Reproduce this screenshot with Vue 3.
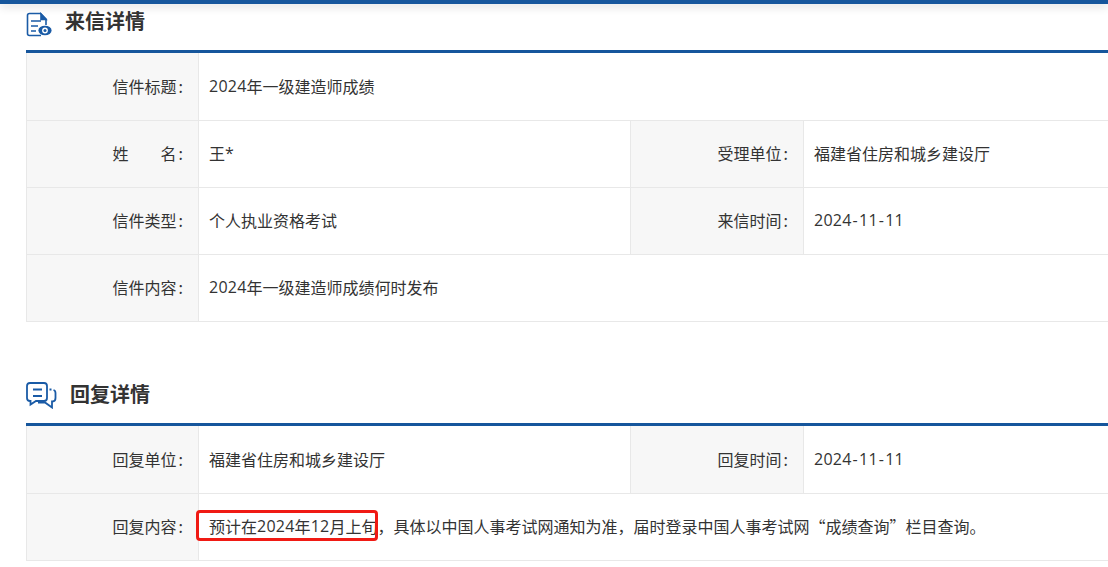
<template>
  <div class="page">
    <div class="topbar"></div>
    <section class="first">
      <h2 class="title">
        <svg class="icon1" width="26" height="26" viewBox="0 0 26 26" fill="none" stroke="#1a5ba6" stroke-width="1.6">
          <path d="M15 23.5H3.5Q1.5 23.5 1.5 21.5V3.5Q1.5 1.5 3.5 1.5H14.5L20 7V13" />
          <path d="M15 2V7.5H20Z" fill="#1a5ba6" />
          <path d="M5 9H15M5 14H12M5 19H10" />
          <ellipse cx="19" cy="18.5" rx="6.6" ry="4.8" fill="#1a5ba6" stroke="none" />
          <circle cx="19" cy="18.5" r="2.9" fill="#fff" stroke="none" />
          <circle cx="19" cy="18.5" r="1.5" fill="#1a5ba6" stroke="none" />
        </svg>
        <span>来信详情</span>
      </h2>
      <div class="rows">
        <div class="row" v-for="(row, i) in letter" :key="i">
          <template v-for="(c, j) in row" :key="j">
            <div class="label" :class="{ second: j > 0 }">{{ c.k }}<span class="colon">:</span></div>
            <div class="value" :class="{ half: row.length > 1 && j === 0 }">
              <span v-for="(r, n) in runs(c.v)" :key="n" :class="r.cls">{{ r.t }}</span>
            </div>
          </template>
        </div>
      </div>
    </section>
    <section class="second-sec">
      <h2 class="title">
        <svg class="icon2" width="31" height="27" viewBox="0 0 31 27" fill="none" stroke="#1a5ba6" stroke-width="1.8">
          <path d="M4 1H18Q21 1 21 4V16Q21 19 18 19H10L4.5 22.5V19H4Q1 19 1 16V4Q1 1 4 1Z" />
          <path d="M7 7.5H16M7 14H16" />
          <path d="M23.5 7.5H25.5M27.5 8Q29.5 8.5 29.5 11V16Q29.5 19.5 26.5 19.5H26V25.5L19 20.5H12" />
        </svg>
        <span>回复详情</span>
      </h2>
      <div class="rows">
        <div class="row" v-for="(row, i) in reply" :key="i">
          <template v-for="(c, j) in row" :key="j">
            <div class="label" :class="{ second: j > 0 }">{{ c.k }}<span class="colon">:</span></div>
            <div class="value" :class="{ half: row.length > 1 && j === 0 }">
              <span v-for="(r, n) in runs(c.v)" :key="n" :class="r.cls">{{ r.t }}</span>
              <span v-if="c.mark" class="mark"></span>
            </div>
          </template>
        </div>
      </div>
    </section>
  </div>
</template>

<script setup>
const letter = [
  [{ k: '信件标题', v: '2024年一级建造师成绩' }],
  [{ k: '姓\u3000\u3000名', v: '王*' }, { k: '受理单位', v: '福建省住房和城乡建设厅' }],
  [{ k: '信件类型', v: '个人执业资格考试' }, { k: '来信时间', v: '2024-11-11' }],
  [{ k: '信件内容', v: '2024年一级建造师成绩何时发布' }],
]
const reply = [
  [{ k: '回复单位', v: '福建省住房和城乡建设厅' }, { k: '回复时间', v: '2024-11-11' }],
  [{ k: '回复内容', v: '预计在2024年12月上旬\uFF0C具体以中国人事考试网通知为准\uFF0C届时登录中国人事考试网\u201C成绩查询\u201D栏目查询\u3002', mark: true }],
]
function runs(text) {
  return text
    .split(/([0-9*]+|-)/)
    .filter(Boolean)
    .map((t) => ({ t, cls: t === '-' ? 'num dash' : /^[0-9*]+$/.test(t) ? 'num' : '' }))
}
</script>

<style>
html, body { margin: 0; background: #fff; overflow: hidden; }
</style>

<style scoped>
.page {
  width: 1108px;
  height: 567px;
  overflow: hidden;
  font-family: "Noto Sans CJK SC", sans-serif;
  color: #333;
}
.topbar {
  height: 4px;
  background: #16569c;
  box-shadow: 0 2px 10px rgba(0, 0, 0, 0.2);
}
section { margin-left: 26px; width: 1200px; }
.title {
  display: flex;
  align-items: center;
  box-sizing: content-box;
  margin: 0;
  height: 32px;
  padding-bottom: 14px;
  gap: 13px;
  font-size: 20px;
  font-weight: 700;
  color: #333;
  border-bottom: 3px solid #16569c;
}
.icon1 { margin-top: 10px; }
.icon2 { margin-top: 5px; }
.second-sec { margin-top: 55px; }
.rows { border-left: 1px solid #e8e8e8; }
.row { display: flex; height: 66px; border-bottom: 1px solid #e8e8e8; }
.row:first-child { height: 67px; }
.label {
  flex: none;
  box-sizing: border-box;
  width: 172px;
  padding-right: 15px;
  padding-bottom: 2px;
  display: flex;
  align-items: center;
  justify-content: flex-end;
  background: #f7f7f7;
  border-right: 1px solid #e8e8e8;
  font-size: 16px;
  white-space: pre;
}
.colon { margin-left: 2px; }
.label.second { width: 174px; border-left: 1px solid #e8e8e8; }
.value {
  position: relative;
  flex: 1;
  display: flex;
  align-items: center;
  padding-left: 10px;
  padding-bottom: 2px;
  font-size: 16px;
  white-space: pre;
}
.value.half { flex: none; box-sizing: border-box; width: 431px; }
.num { font-family: "Open Sans", sans-serif; letter-spacing: 0.25px; }
.dash { margin: 0 1px; }
.mark {
  position: absolute;
  left: -3px;
  top: 16px;
  width: 176px;
  height: 25px;
  border: 3px solid #f01a14;
  border-radius: 4px;
}
</style>
